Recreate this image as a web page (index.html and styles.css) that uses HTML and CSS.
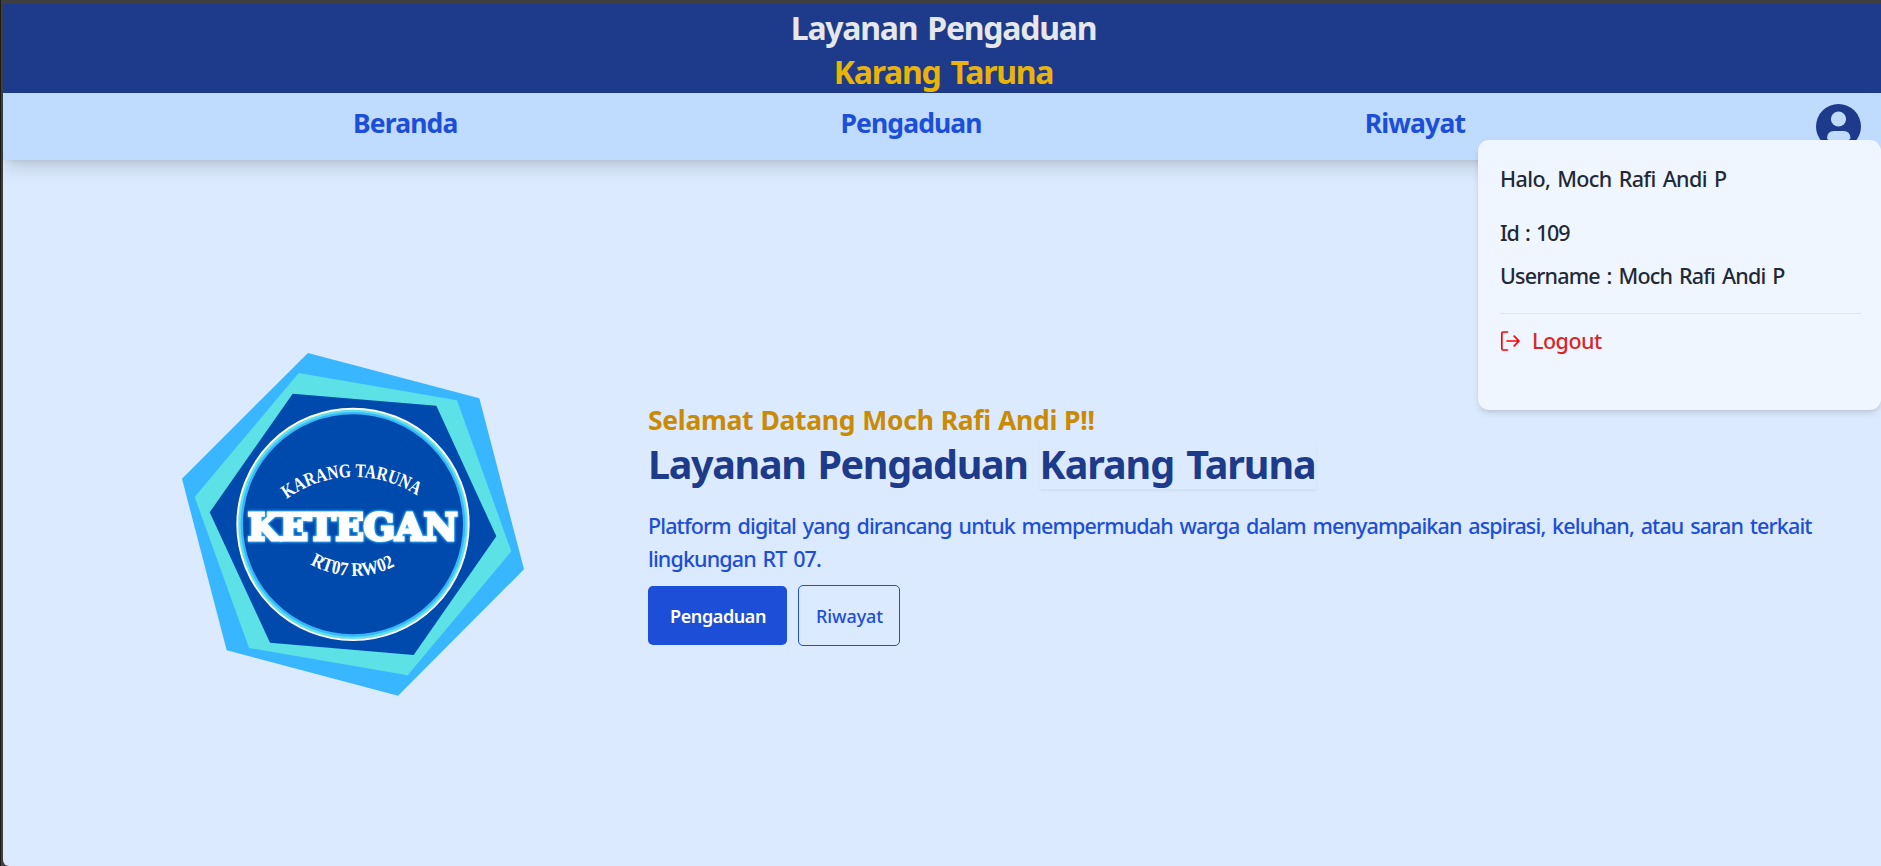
FILE: index.html
```html
<!DOCTYPE html>
<html lang="id">
<head>
<meta charset="utf-8">
<title>Layanan Pengaduan Karang Taruna</title>
<link rel="stylesheet" href="styles.css">
</head>
<body>
<div class="page">
  <header class="banner">
    <div class="banner-title">Layanan Pengaduan</div>
    <div class="banner-sub">Karang Taruna</div>
  </header>
  <nav class="nav">
    <a class="nav-link">Beranda</a>
    <a class="nav-link nav-report">Pengaduan</a>
    <a class="nav-link nav-history">Riwayat</a>
    <svg class="avatar" viewBox="0 0 45 45"><circle cx="22.5" cy="22.5" r="22.5" fill="#1e3a8a"/><circle cx="22.5" cy="15" r="7.6" fill="#bfdbfe"/><path d="M11 34.500q0-7.500 7-7.500h9.500q7 0 7 7.500q-5 5.500-12 5.500t-11.500-5.500z" fill="#bfdbfe"/></svg>
    <aside class="menu">
      <p class="menu-row hello">Halo, Moch Rafi Andi P</p>
      <p class="menu-row menu-id">Id : 109</p>
      <p class="menu-row menu-user">Username : Moch Rafi Andi P</p>
      <div class="menu-exit">
        <svg class="exit-icon" viewBox="0 0 20 20" fill="none" stroke="#ff0000" stroke-width="1.700" stroke-linecap="round" stroke-linejoin="round"><path d="M7.500 1H3.300q-1.500 0-1.500 1.500v15q0 1.500 1.500 1.500h4.200M7 10h12M14.200 5.200l4.800 4.800-4.800 4.800"/></svg>
        <span>Logout</span>
      </div>
    </aside>
  </nav>
  <main class="hero">
    <svg class="logo" viewBox="0 0 1200 1200">
      <defs>
        <path id="arc-top" d="M380 507A345 345 0 0 1 786 507"/>
        <path id="arc-bottom" d="M450 702A265 265 0 0 0 716 702"/>
      </defs>
      <path fill="#38b6ff" d="M444 69L958 205L1092 718L714 1097L200 961L66 446Z"/>
      <path fill="#5ce1e6" d="M416 129L891 211L1054 664L743 1036L267 954L104 501Z"/>
      <path fill="#004aad" d="M398 191L829 227L1009 619L761 975L330 938L149 547Z"/>
      <circle cx="579" cy="583" r="335" fill="none" stroke="#38b6ff" stroke-width="10"/>
      <circle cx="579" cy="583" r="341" fill="none" stroke="#5ce1e6" stroke-width="8"/>
      <circle cx="579" cy="583" r="347" fill="none" stroke="#fff" stroke-width="6"/>
      <text class="logo-script"><textPath href="#arc-top" textLength="416" lengthAdjust="spacingAndGlyphs">KARANG TARUNA</textPath></text>
      <text class="logo-name logo-glow" x="263" y="631" textLength="630" lengthAdjust="spacingAndGlyphs">KETEGAN</text>
      <text class="logo-script"><textPath href="#arc-bottom" textLength="266" lengthAdjust="spacingAndGlyphs">RT07 RW02</textPath></text>
    </svg>
    <section class="copy">
      <h2 class="welcome">Selamat Datang Moch Rafi Andi P!!</h2>
      <h1 class="title">Layanan Pengaduan <span class="title-box">Karang Taruna</span></h1>
      <p class="lead">Platform digital yang dirancang untuk mempermudah warga dalam menyampaikan aspirasi, keluhan, atau saran terkait lingkungan RT 07.</p>
      <div class="actions">
        <a class="btn btn-solid">Pengaduan</a>
        <a class="btn btn-line">Riwayat</a>
      </div>
    </section>
  </main>
</div>
</body>
</html>
```

FILE: styles.css
```css
* { box-sizing: border-box; margin: 0; }
body {
  height: 866px;
  padding: 4px 0 0 3px;
  overflow: hidden;
  background: linear-gradient(90deg, #1c1c1c 1px, #3f3f3f 1px);
  font-family: "Noto Sans", "Open Sans", sans-serif;
}
.page {
  height: 862px;
  background: #dbeafe;
  border-bottom-left-radius: 6px;
}
.banner {
  height: 89px;
  padding: 2px 0 0 3px;
  background: #1e3a8a;
  color: #e5e7eb;
  font-size: 32px;
  font-weight: 700;
  letter-spacing: -1.250px;
  word-spacing: 3px;
  line-height: 44px;
  text-align: center;
}
.banner-sub { color: #eab308; }
.nav {
  position: relative;
  display: flex;
  height: 67px;
  padding: 11px 20px 0 350px;
  background: #bfdbfe;
  color: #1d4ed8;
  box-shadow: 0 11px 17px -3px rgba(0, 0, 0, .13), 0 4px 7px -4px rgba(0, 0, 0, .12);
}
.nav-link {
  margin-right: 383px;
  font-size: 26.500px;
  font-weight: 700;
  letter-spacing: -.850px;
  line-height: 38px;
  white-space: nowrap;
}
.nav-report { letter-spacing: -.900px; }
.nav-history { margin-right: auto; }
.avatar { width: 45px; height: 45px; }
.menu {
  position: absolute;
  top: 47px;
  right: 0;
  width: 403px;
  height: 270px;
  padding: 17px 20px 0 22px;
  border-radius: 11px;
  background: #eff6ff;
  color: #1f2937;
  font-size: 21.500px;
  font-weight: 500;
  word-spacing: 2px;
  box-shadow: 0 4px 7px -1px rgba(0, 0, 0, .12), 0 2px 4px -2px rgba(0, 0, 0, .1);
}
.menu-row { line-height: 43px; white-space: nowrap; }
.hello { margin-bottom: 11px; letter-spacing: -.600px; }
.menu-id { letter-spacing: -1.200px; }
.menu-user { letter-spacing: -.800px; }
.menu-exit {
  display: flex;
  align-items: center;
  gap: 12px;
  margin-top: 16px;
  padding-top: 10px;
  border-top: 1px solid #e2e5ec;
  color: #dc2626;
  letter-spacing: -.500px;
  line-height: 34px;
}
.exit-icon { width: 20px; height: 20px; margin-top: -1px; }
.hero { display: flex; gap: 88px; padding: 170px 30px 0 157px; }
.logo { flex: none; width: 400px; height: 400px; }
.logo-name {
  fill: #fff;
  stroke: #fff;
  stroke-width: 9px;
  font: 700 112px "DejaVu Serif", serif;
}
.logo-glow { filter: drop-shadow(0 0 3px #38b6ff) drop-shadow(0 0 3px #38b6ff); }
.logo-script { fill: #fff; font: 700 58px "Liberation Serif", serif; }
.copy { padding-top: 70px; }
.welcome { color: #ca8a04; font-size: 26.500px; letter-spacing: -.300px; word-spacing: .500px; line-height: 40px; }
.title { color: #1e3a8a; font-size: 39.500px; letter-spacing: -1.350px; word-spacing: 3px; line-height: 49px; }
.title-box { display: inline-block; letter-spacing: -1.100px; box-shadow: 0 2px 3px rgba(0, 0, 0, .05); }
.lead {
  margin-top: 20px;
  color: #1d4ed8;
  font-size: 21.500px;
  font-weight: 500;
  letter-spacing: -.870px;
  word-spacing: 2px;
  line-height: 33px;
}
.actions { display: flex; align-items: center; gap: 11px; margin-top: 10px; font-size: 18px; line-height: 27px; }
.btn { border-radius: 5px; }
.btn-solid { width: 139px; padding: 17px 22px 15px; background: #1d4ed8; color: #fff; font-weight: 600; letter-spacing: -.400px; }
.btn-line { width: 102px; padding: 17px 17px 15px; border: 1px solid #1d4ed8; color: #1d4ed8; font-weight: 500; letter-spacing: -.100px; }
```
